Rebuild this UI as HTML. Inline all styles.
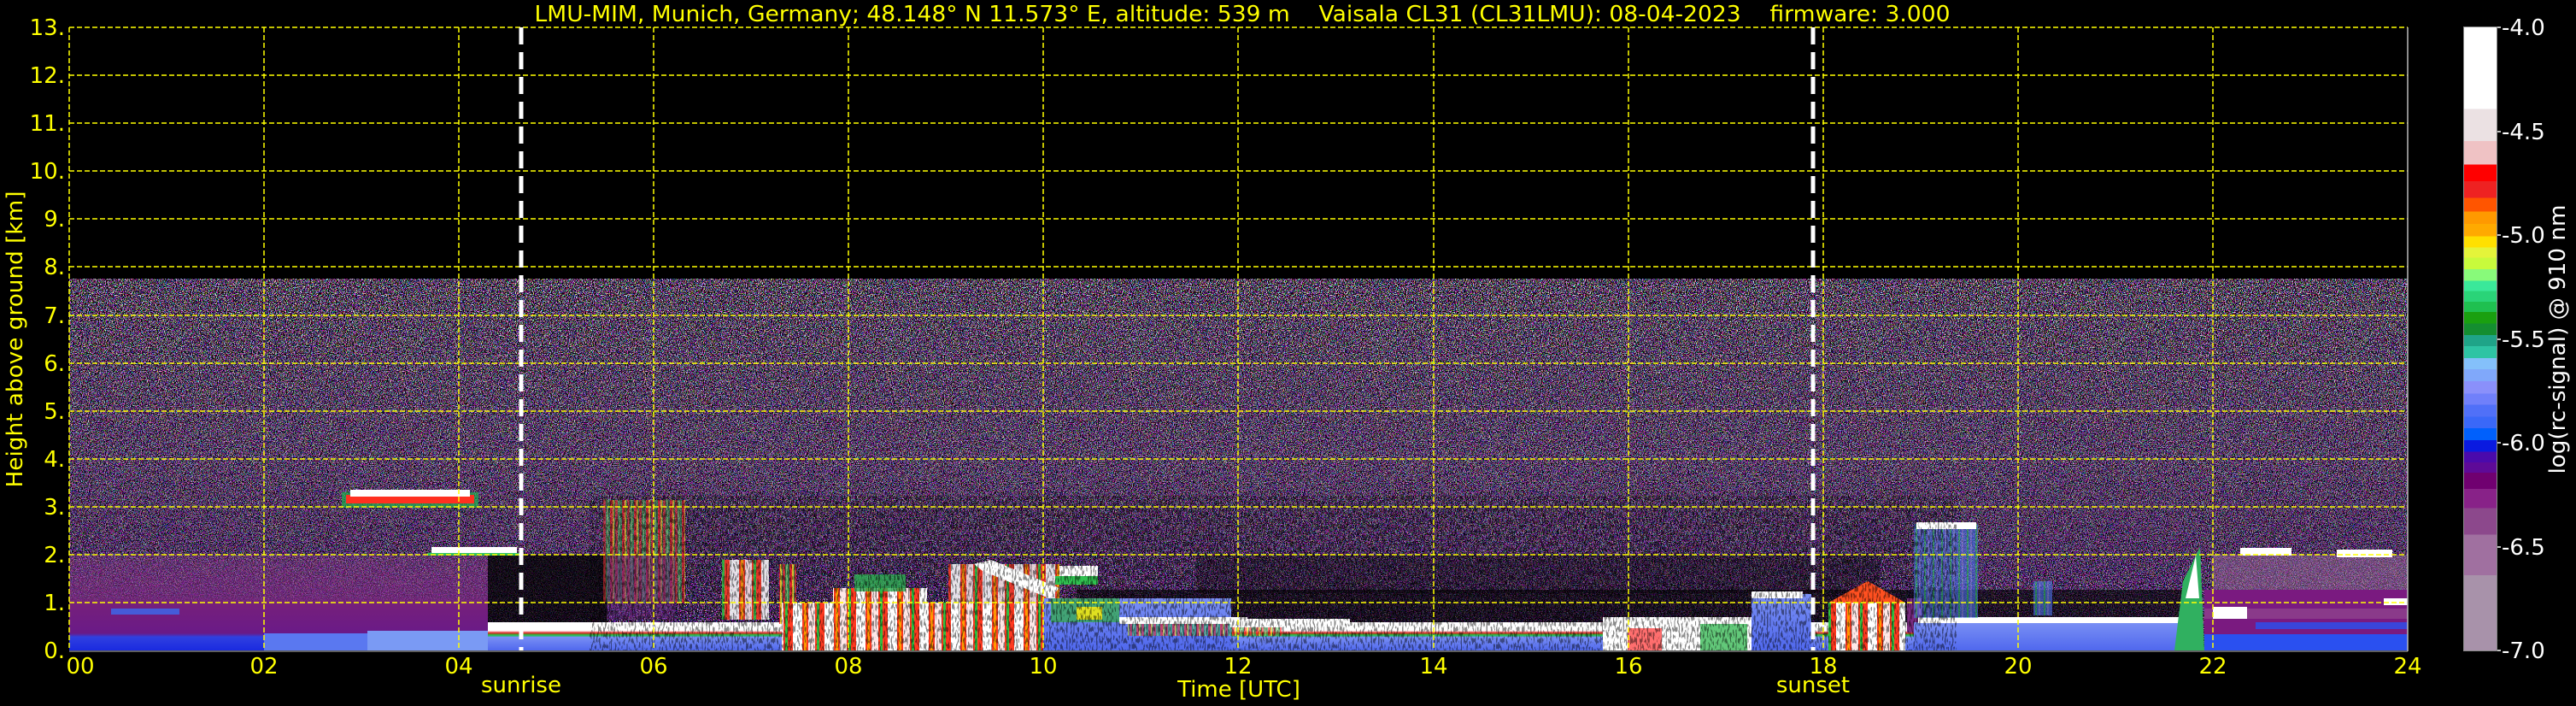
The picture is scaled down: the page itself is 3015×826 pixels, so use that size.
<!DOCTYPE html>
<html><head><meta charset="utf-8"><style>
html,body{margin:0;padding:0;background:#000;}
body{width:3015px;height:826px;overflow:hidden;position:relative;}
svg{position:absolute;left:0;top:0;}
#cb{position:absolute;left:2884px;top:32px;width:38px;height:729px;
background:linear-gradient(to bottom,#ffffff 0 13.07%,#ebe1e3 13.07% 18.27%,#efc2c4 18.27% 22.02%,#ff0000 22.02% 24.69%,#ee2222 24.69% 27.36%,#ff5500 27.36% 29.53%,#ff9900 29.53% 31.55%,#ffaa00 31.55% 33.57%,#ffe000 33.57% 35.31%,#e4f43a 35.31% 36.97%,#c8fa3c 36.97% 38.84%,#88fa7a 38.84% 40.65%,#3ae89a 40.65% 42.31%,#2ad478 42.31% 44.04%,#1fc050 44.04% 45.70%,#1aa010 45.70% 47.51%,#148e30 47.51% 49.39%,#1fa488 49.39% 51.19%,#2ec4a4 51.19% 53.07%,#84c0fa 53.07% 54.87%,#80a8fa 54.87% 56.82%,#8a90fa 56.82% 58.77%,#7080fa 58.77% 60.58%,#5070f8 60.58% 62.45%,#3a68f8 62.45% 64.33%,#0060fc 64.33% 66.28%,#0a1ae0 66.28% 68.09%,#4a0aac 68.09% 69.82%,#5e0a98 69.82% 71.48%,#700070 71.48% 74.08%,#882288 74.08% 77.18%,#8c488c 77.18% 81.44%,#a070a0 81.44% 87.94%,#a892aa 87.94% 100%);
box-shadow:0 0 0 1px #888;}
</style></head><body>
<svg width="3015" height="826" viewBox="0 0 3015 826" xmlns="http://www.w3.org/2000/svg" font-family="'DejaVu Sans','Liberation Sans',sans-serif">
<defs>
<filter id="nc" x="0" y="0" width="100%" height="100%" color-interpolation-filters="sRGB">
<feTurbulence type="fractalNoise" baseFrequency="0.9" numOctaves="1" seed="4"/>
<feColorMatrix type="matrix" values="7 0 0 0 -2.7  0 7 0 0 -2.9  0 0 7 0 -2.6  0 0 0 40 -19.6"/>
</filter>
<filter id="np" x="0" y="0" width="100%" height="100%" color-interpolation-filters="sRGB">
<feTurbulence type="fractalNoise" baseFrequency="0.9" numOctaves="1" seed="9"/>
<feColorMatrix type="matrix" values="4 0 0 0 -1.3  0 5 0 0 -2.2  0 0 4 0 -0.9  0 0 0 40 -20.4"/>
</filter>
<filter id="nk" x="0" y="0" width="100%" height="100%" color-interpolation-filters="sRGB">
<feTurbulence type="fractalNoise" baseFrequency="0.6 0.15" numOctaves="1" seed="21"/>
<feColorMatrix type="matrix" values="0 0 0 0 0  0 0 0 0 0  0 0 0 0 0  0 0 0 30 -16"/>
</filter>
<linearGradient id="gm1" x1="0" y1="0" x2="0" y2="1"><stop offset="0" stop-color="#fff"/><stop offset="0.5" stop-color="#fff" stop-opacity="0.8"/><stop offset="1" stop-color="#fff" stop-opacity="0.2"/></linearGradient>
<linearGradient id="gm2" x1="0" y1="0" x2="0" y2="1"><stop offset="0" stop-color="#fff" stop-opacity="0.1"/><stop offset="0.55" stop-color="#fff" stop-opacity="0.5"/><stop offset="1" stop-color="#fff"/></linearGradient>
<mask id="m1" maskUnits="userSpaceOnUse" x="81" y="326" width="2737" height="435"><rect x="81" y="326" width="2737" height="435" fill="url(#gm1)"/></mask>
<mask id="m2" maskUnits="userSpaceOnUse" x="81" y="326" width="2737" height="435"><rect x="81" y="326" width="2737" height="435" fill="url(#gm2)"/></mask>
<linearGradient id="leftp" x1="0" y1="0" x2="0" y2="1"><stop offset="0" stop-color="#8a3a8a" stop-opacity="0.3"/><stop offset="0.45" stop-color="#7a2a80" stop-opacity="0.7"/><stop offset="0.5" stop-color="#76207a"/><stop offset="0.82" stop-color="#6a1a88"/><stop offset="0.86" stop-color="#3040e0"/><stop offset="1" stop-color="#1a2ae0"/></linearGradient>
<linearGradient id="surf" x1="0" y1="0" x2="0" y2="1"><stop offset="0" stop-color="#ffffff"/><stop offset="0.3" stop-color="#ffffff"/><stop offset="0.38" stop-color="#e02020"/><stop offset="0.45" stop-color="#20c040"/><stop offset="0.55" stop-color="#6a9af0"/><stop offset="1" stop-color="#5a70ee"/></linearGradient>
<linearGradient id="blue" x1="0" y1="0" x2="0" y2="1"><stop offset="0" stop-color="#7a90f4"/><stop offset="1" stop-color="#5068ee"/></linearGradient>
<pattern id="strk" width="14" height="40" patternUnits="userSpaceOnUse"><rect width="14" height="40" fill="#2a9a50"/><rect x="0" width="3" height="40" fill="#ff2020"/><rect x="3" width="2" height="40" fill="#ffe020"/><rect x="6" width="3" height="40" fill="#e03030"/><rect x="10" width="2" height="40" fill="#7ad070"/></pattern>
<pattern id="hot" width="37" height="60" patternUnits="userSpaceOnUse"><rect width="37" height="60" fill="#ff3a20"/><rect x="3" width="11" height="60" fill="#ffffff"/><rect x="16" width="3" height="60" fill="#ff9a00"/><rect x="21" width="8" height="60" fill="#ffe8e8"/><rect x="31" width="3" height="60" fill="#30c040"/></pattern>
<pattern id="bstr" width="10" height="40" patternUnits="userSpaceOnUse"><rect width="10" height="40" fill="#4a70e8"/><rect x="2" width="2" height="40" fill="#30c070"/><rect x="6" width="2" height="40" fill="#8090f0"/></pattern>
</defs>

<!-- noise -->
<rect x="81" y="326" width="2737" height="435" filter="url(#nc)" mask="url(#m1)"/>
<rect x="81" y="326" width="2737" height="435" filter="url(#np)" mask="url(#m2)"/>

<!-- dark gaps -->
<rect x="571" y="649" width="140" height="88" fill="#000" opacity="0.75"/>
<rect x="1260" y="690" width="1300" height="40" fill="#000" opacity="0.6"/>
<rect x="1400" y="649" width="800" height="45" fill="#000" opacity="0.3"/>

<!-- left purple block -->
<rect x="81" y="649" width="490" height="112" fill="url(#leftp)"/>
<rect x="309" y="741" width="262" height="20" fill="#5a78f0"/>
<rect x="430" y="738" width="141" height="23" fill="#7a9af4"/>
<rect x="130" y="712" width="80" height="7" fill="#3a6af0" opacity="0.8"/>

<!-- cloud 3 km -->
<rect x="400" y="576" width="160" height="18" fill="#20b050" opacity="0.7"/>
<rect x="405" y="579" width="150" height="10" fill="#ff3020"/>
<rect x="410" y="573" width="140" height="8" fill="#ffffff"/>
<rect x="505" y="640" width="100" height="8" fill="#ffffff"/>
<rect x="500" y="647" width="110" height="3" fill="#30c060"/>

<!-- surface layer -->
<rect x="571" y="728" width="1680" height="33" fill="url(#surf)"/>
<rect x="571" y="745" width="1680" height="16" fill="url(#blue)"/>

<!-- streaks 5.5-6.3h -->
<rect x="706" y="585" width="96" height="120" fill="url(#strk)" opacity="0.6"/>
<rect x="710" y="650" width="80" height="75" fill="#6a2a80" opacity="0.5"/>

<!-- aerosol 7-10h -->
<rect x="845" y="655" width="55" height="70" fill="url(#hot)" opacity="0.85"/>
<rect x="912" y="660" width="20" height="70" fill="url(#strk)" opacity="0.8"/>
<rect x="915" y="705" width="320" height="56" fill="url(#hot)"/>
<rect x="975" y="688" width="110" height="40" fill="url(#hot)"/>
<rect x="1000" y="672" width="60" height="20" fill="#2ab050" opacity="0.8"/>
<rect x="1110" y="660" width="130" height="60" fill="url(#hot)" opacity="0.85"/>
<polygon points="1140,660 1160,655 1240,688 1228,700 1150,668" fill="#ffffff"/>
<rect x="1240" y="662" width="45" height="12" fill="#ffffff"/>
<rect x="1235" y="674" width="50" height="10" fill="#30c050"/>

<!-- 10-12h -->
<rect x="1221" y="700" width="220" height="61" fill="url(#blue)"/>
<rect x="1230" y="700" width="80" height="28" fill="#30b040" opacity="0.7"/>
<rect x="1260" y="710" width="30" height="15" fill="#e0e020"/>
<rect x="1310" y="722" width="150" height="8" fill="#ffffff"/>
<rect x="1320" y="730" width="180" height="14" fill="url(#strk)" opacity="0.6"/>
<rect x="1440" y="724" width="140" height="10" fill="#ffffff"/>

<!-- 16-18h -->
<rect x="1876" y="722" width="175" height="39" fill="#ffffff"/>
<rect x="1905" y="735" width="40" height="26" fill="#ff3030" opacity="0.7"/>
<rect x="1990" y="730" width="55" height="31" fill="#20b040" opacity="0.7"/>
<rect x="2050" y="695" width="70" height="66" fill="url(#blue)"/>
<rect x="2050" y="692" width="60" height="8" fill="#ffffff"/>
<rect x="2140" y="705" width="90" height="56" fill="url(#hot)"/>
<polygon points="2140,705 2186,680 2230,705" fill="#ff5020"/>
<rect x="2232" y="700" width="18" height="40" fill="#7a2a80"/>

<!-- 19-22h -->
<rect x="2240" y="728" width="320" height="33" fill="url(#blue)"/>
<rect x="2245" y="722" width="310" height="7" fill="#ffffff"/>
<rect x="2240" y="613" width="75" height="110" fill="url(#bstr)" opacity="0.6"/>
<rect x="2243" y="611" width="70" height="8" fill="#ffffff"/>
<rect x="2380" y="680" width="22" height="40" fill="url(#bstr)" opacity="0.6"/>
<polygon points="2545,761 2555,680 2575,640 2580,761" fill="#30b060"/>
<polygon points="2558,700 2570,650 2574,700" fill="#ffffff"/>

<!-- 22-24h -->
<rect x="2590" y="649" width="228" height="45" fill="#9a6a9a" opacity="0.5"/>
<rect x="2580" y="690" width="238" height="71" fill="#7a1a80"/>
<rect x="2580" y="712" width="238" height="12" fill="#8a3a8a"/>
<rect x="2640" y="728" width="178" height="8" fill="#2a50f0" opacity="0.8"/>
<rect x="2580" y="742" width="238" height="19" fill="#2a50f0"/>
<rect x="2590" y="710" width="40" height="14" fill="#ffffff"/>
<rect x="2622" y="641" width="60" height="9" fill="#ffffff"/>
<rect x="2735" y="643" width="65" height="9" fill="#ffffff"/>
<rect x="2790" y="700" width="28" height="8" fill="#ffffff"/>

<!-- speckle to soften blocks -->
<rect x="690" y="580" width="1600" height="181" filter="url(#nk)" opacity="0.45"/>

<!-- grid -->
<g stroke="#ffff00" stroke-width="1.5" stroke-dasharray="6 3">
<line x1="81" y1="32" x2="2818" y2="32"/><line x1="81" y1="88" x2="2818" y2="88"/><line x1="81" y1="144" x2="2818" y2="144"/><line x1="81" y1="200" x2="2818" y2="200"/><line x1="81" y1="256" x2="2818" y2="256"/><line x1="81" y1="312" x2="2818" y2="312"/><line x1="81" y1="369" x2="2818" y2="369"/><line x1="81" y1="425" x2="2818" y2="425"/><line x1="81" y1="481" x2="2818" y2="481"/><line x1="81" y1="537" x2="2818" y2="537"/><line x1="81" y1="593" x2="2818" y2="593"/><line x1="81" y1="649" x2="2818" y2="649"/><line x1="81" y1="705" x2="2818" y2="705"/>
<line x1="81" y1="32" x2="81" y2="761"/><line x1="309" y1="32" x2="309" y2="761"/><line x1="537" y1="32" x2="537" y2="761"/><line x1="765" y1="32" x2="765" y2="761"/><line x1="993" y1="32" x2="993" y2="761"/><line x1="1221" y1="32" x2="1221" y2="761"/><line x1="1449" y1="32" x2="1449" y2="761"/><line x1="1678" y1="32" x2="1678" y2="761"/><line x1="1906" y1="32" x2="1906" y2="761"/><line x1="2134" y1="32" x2="2134" y2="761"/><line x1="2362" y1="32" x2="2362" y2="761"/><line x1="2590" y1="32" x2="2590" y2="761"/>
</g>
<line x1="2818" y1="32" x2="2818" y2="762" stroke="#bbb" stroke-width="1.5"/>
<line x1="81" y1="762" x2="2818" y2="762" stroke="#bbb" stroke-width="1"/>
<g stroke="#ffffff" stroke-width="5" stroke-dasharray="20 9">
<line x1="610" y1="32" x2="610" y2="761"/><line x1="2122" y1="32" x2="2122" y2="761"/>
</g>

<!-- text -->
<g fill="#ffff00" font-size="26">
<text x="1454" y="25" text-anchor="middle" textLength="1657" lengthAdjust="spacingAndGlyphs" xml:space="preserve" style="white-space:pre">LMU-MIM, Munich, Germany; 48.148° N 11.573° E, altitude: 539 m    Vaisala CL31 (CL31LMU): 08-04-2023    firmware: 3.000</text>
<g text-anchor="end">
<text x="76" y="41">13.</text><text x="76" y="97">12.</text><text x="76" y="153">11.</text><text x="76" y="209">10.</text><text x="76" y="265">9.</text><text x="76" y="321">8.</text><text x="76" y="378">7.</text><text x="76" y="434">6.</text><text x="76" y="490">5.</text><text x="76" y="546">4.</text><text x="76" y="602">3.</text><text x="76" y="658">2.</text><text x="76" y="714">1.</text><text x="76" y="770">0.</text>
</g>
<g text-anchor="middle">
<text x="94" y="788">00</text><text x="309" y="788">02</text><text x="537" y="788">04</text><text x="765" y="788">06</text><text x="993" y="788">08</text><text x="1221" y="788">10</text><text x="1449" y="788">12</text><text x="1678" y="788">14</text><text x="1906" y="788">16</text><text x="2134" y="788">18</text><text x="2362" y="788">20</text><text x="2590" y="788">22</text><text x="2818" y="788">24</text>
<text x="1450" y="815">Time [UTC]</text>
<text x="610" y="810">sunrise</text>
<text x="2122" y="810">sunset</text>
</g>
<text transform="translate(26,397) rotate(-90)" text-anchor="middle" textLength="347" lengthAdjust="spacingAndGlyphs">Height above ground [km]</text>
</g>
<g fill="#ffffff" font-size="26">
<text x="2928" y="41">-4.0</text><text x="2928" y="163">-4.5</text><text x="2928" y="284">-5.0</text><text x="2928" y="406">-5.5</text><text x="2928" y="527">-6.0</text><text x="2928" y="649">-6.5</text><text x="2928" y="770">-7.0</text>
<text transform="translate(3002,397) rotate(-90)" text-anchor="middle" textLength="315" lengthAdjust="spacingAndGlyphs">log(rc-signal) @ 910 nm</text>
</g>
<g stroke="#fff" stroke-width="1.5">
<line x1="2922" y1="32" x2="2927" y2="32"/><line x1="2922" y1="154" x2="2927" y2="154"/><line x1="2922" y1="275" x2="2927" y2="275"/><line x1="2922" y1="397" x2="2927" y2="397"/><line x1="2922" y1="518" x2="2927" y2="518"/><line x1="2922" y1="640" x2="2927" y2="640"/><line x1="2922" y1="761" x2="2927" y2="761"/>
</g>
</svg>
<div id="cb"></div>
</body></html>
